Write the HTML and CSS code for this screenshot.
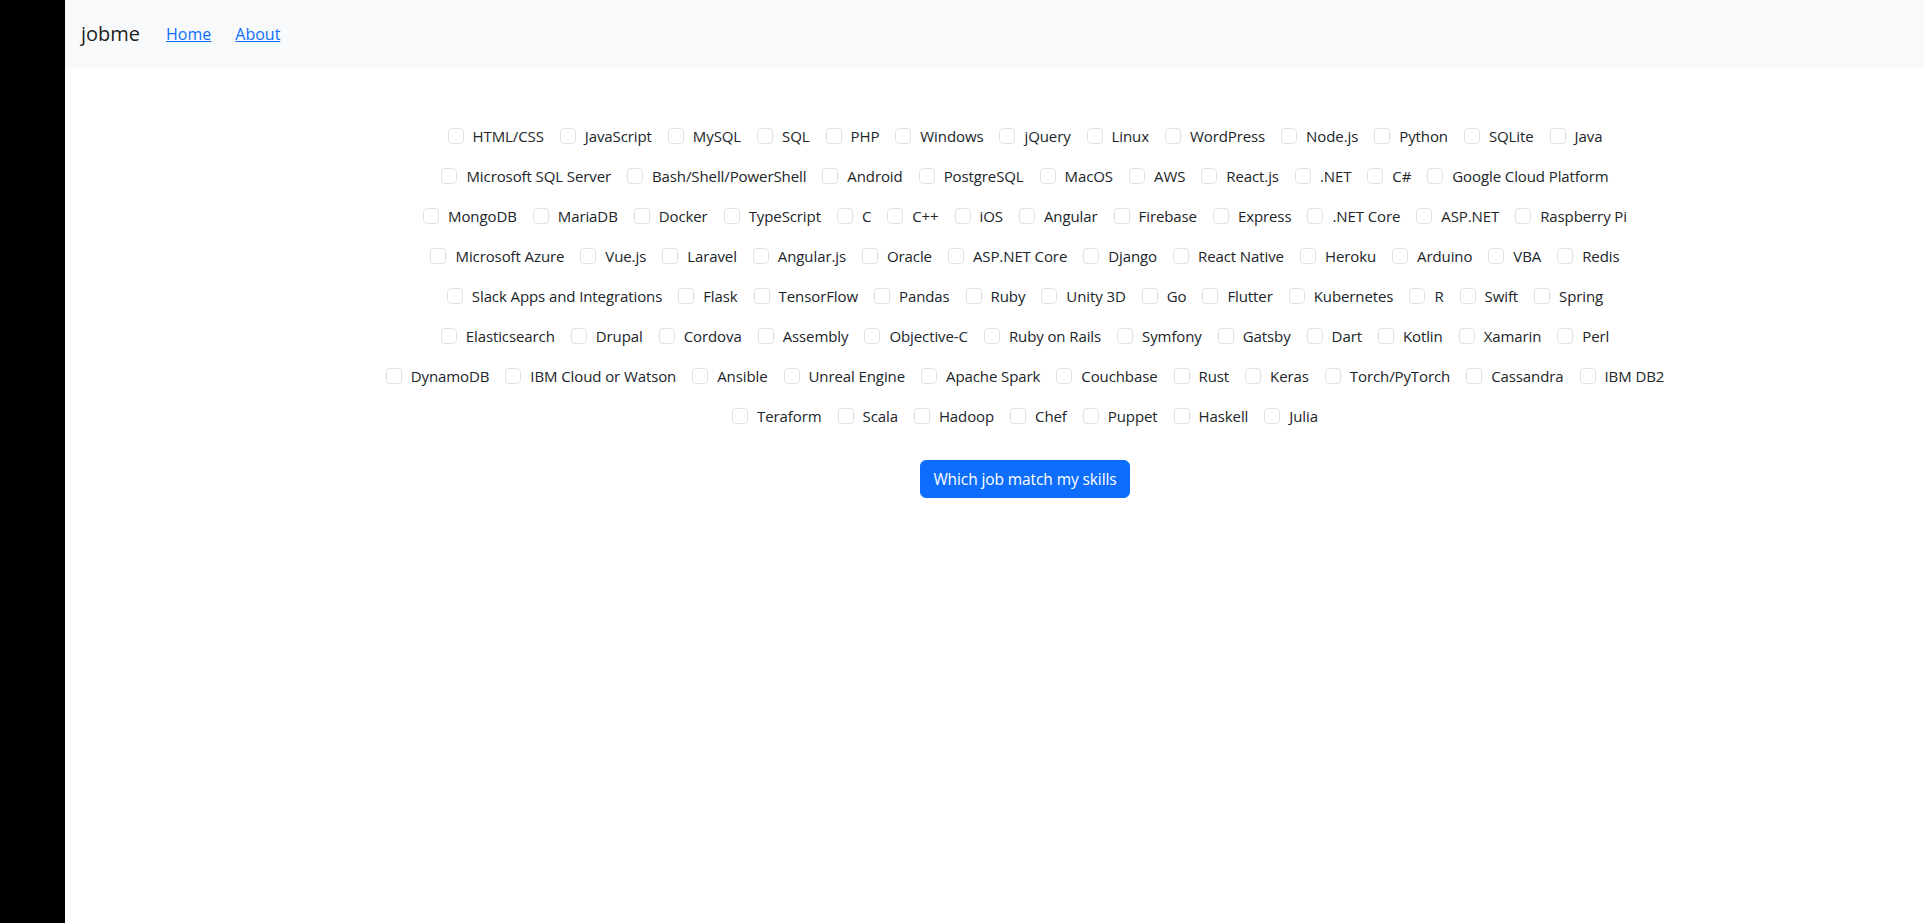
FILE: index.html
```html
<!DOCTYPE html>
<html lang="en">
<head>
<meta charset="utf-8">
<title>jobme</title>
<link rel="stylesheet" href="styles.css">
</head>
<body>
<div class="sidebar"></div>
<div class="main">
  <nav class="navbar">
    <span class="brand">jobme</span>
    <a class="navlink" href="#">Home</a>
    <a class="navlink" href="#">About</a>
  </nav>
  <form class="content">
    <div class="skills">
      <div class="row">
        <label class="check"><input type="checkbox"><span>HTML/CSS</span></label>
        <label class="check"><input type="checkbox"><span>JavaScript</span></label>
        <label class="check"><input type="checkbox"><span>MySQL</span></label>
        <label class="check"><input type="checkbox"><span>SQL</span></label>
        <label class="check"><input type="checkbox"><span>PHP</span></label>
        <label class="check"><input type="checkbox"><span>Windows</span></label>
        <label class="check"><input type="checkbox"><span>jQuery</span></label>
        <label class="check"><input type="checkbox"><span>Linux</span></label>
        <label class="check"><input type="checkbox"><span>WordPress</span></label>
        <label class="check"><input type="checkbox"><span>Node.js</span></label>
        <label class="check"><input type="checkbox"><span>Python</span></label>
        <label class="check"><input type="checkbox"><span>SQLite</span></label>
        <label class="check"><input type="checkbox"><span>Java</span></label>
      </div>
      <div class="row">
        <label class="check"><input type="checkbox"><span>Microsoft SQL Server</span></label>
        <label class="check"><input type="checkbox"><span>Bash/Shell/PowerShell</span></label>
        <label class="check"><input type="checkbox"><span>Android</span></label>
        <label class="check"><input type="checkbox"><span>PostgreSQL</span></label>
        <label class="check"><input type="checkbox"><span>MacOS</span></label>
        <label class="check"><input type="checkbox"><span>AWS</span></label>
        <label class="check"><input type="checkbox"><span>React.js</span></label>
        <label class="check"><input type="checkbox"><span>.NET</span></label>
        <label class="check"><input type="checkbox"><span>C#</span></label>
        <label class="check"><input type="checkbox"><span>Google Cloud Platform</span></label>
      </div>
      <div class="row">
        <label class="check"><input type="checkbox"><span>MongoDB</span></label>
        <label class="check"><input type="checkbox"><span>MariaDB</span></label>
        <label class="check"><input type="checkbox"><span>Docker</span></label>
        <label class="check"><input type="checkbox"><span>TypeScript</span></label>
        <label class="check"><input type="checkbox"><span>C</span></label>
        <label class="check"><input type="checkbox"><span>C++</span></label>
        <label class="check"><input type="checkbox"><span>iOS</span></label>
        <label class="check"><input type="checkbox"><span>Angular</span></label>
        <label class="check"><input type="checkbox"><span>Firebase</span></label>
        <label class="check"><input type="checkbox"><span>Express</span></label>
        <label class="check"><input type="checkbox"><span>.NET Core</span></label>
        <label class="check"><input type="checkbox"><span>ASP.NET</span></label>
        <label class="check"><input type="checkbox"><span>Raspberry Pi</span></label>
      </div>
      <div class="row">
        <label class="check"><input type="checkbox"><span>Microsoft Azure</span></label>
        <label class="check"><input type="checkbox"><span>Vue.js</span></label>
        <label class="check"><input type="checkbox"><span>Laravel</span></label>
        <label class="check"><input type="checkbox"><span>Angular.js</span></label>
        <label class="check"><input type="checkbox"><span>Oracle</span></label>
        <label class="check"><input type="checkbox"><span>ASP.NET Core</span></label>
        <label class="check"><input type="checkbox"><span>Django</span></label>
        <label class="check"><input type="checkbox"><span>React Native</span></label>
        <label class="check"><input type="checkbox"><span>Heroku</span></label>
        <label class="check"><input type="checkbox"><span>Arduino</span></label>
        <label class="check"><input type="checkbox"><span>VBA</span></label>
        <label class="check"><input type="checkbox"><span>Redis</span></label>
      </div>
      <div class="row">
        <label class="check"><input type="checkbox"><span>Slack Apps and Integrations</span></label>
        <label class="check"><input type="checkbox"><span>Flask</span></label>
        <label class="check"><input type="checkbox"><span>TensorFlow</span></label>
        <label class="check"><input type="checkbox"><span>Pandas</span></label>
        <label class="check"><input type="checkbox"><span>Ruby</span></label>
        <label class="check"><input type="checkbox"><span>Unity 3D</span></label>
        <label class="check"><input type="checkbox"><span>Go</span></label>
        <label class="check"><input type="checkbox"><span>Flutter</span></label>
        <label class="check"><input type="checkbox"><span>Kubernetes</span></label>
        <label class="check"><input type="checkbox"><span>R</span></label>
        <label class="check"><input type="checkbox"><span>Swift</span></label>
        <label class="check"><input type="checkbox"><span>Spring</span></label>
      </div>
      <div class="row">
        <label class="check"><input type="checkbox"><span>Elasticsearch</span></label>
        <label class="check"><input type="checkbox"><span>Drupal</span></label>
        <label class="check"><input type="checkbox"><span>Cordova</span></label>
        <label class="check"><input type="checkbox"><span>Assembly</span></label>
        <label class="check"><input type="checkbox"><span>Objective-C</span></label>
        <label class="check"><input type="checkbox"><span>Ruby on Rails</span></label>
        <label class="check"><input type="checkbox"><span>Symfony</span></label>
        <label class="check"><input type="checkbox"><span>Gatsby</span></label>
        <label class="check"><input type="checkbox"><span>Dart</span></label>
        <label class="check"><input type="checkbox"><span>Kotlin</span></label>
        <label class="check"><input type="checkbox"><span>Xamarin</span></label>
        <label class="check"><input type="checkbox"><span>Perl</span></label>
      </div>
      <div class="row">
        <label class="check"><input type="checkbox"><span>DynamoDB</span></label>
        <label class="check"><input type="checkbox"><span>IBM Cloud or Watson</span></label>
        <label class="check"><input type="checkbox"><span>Ansible</span></label>
        <label class="check"><input type="checkbox"><span>Unreal Engine</span></label>
        <label class="check"><input type="checkbox"><span>Apache Spark</span></label>
        <label class="check"><input type="checkbox"><span>Couchbase</span></label>
        <label class="check"><input type="checkbox"><span>Rust</span></label>
        <label class="check"><input type="checkbox"><span>Keras</span></label>
        <label class="check"><input type="checkbox"><span>Torch/PyTorch</span></label>
        <label class="check"><input type="checkbox"><span>Cassandra</span></label>
        <label class="check"><input type="checkbox"><span>IBM DB2</span></label>
      </div>
      <div class="row">
        <label class="check"><input type="checkbox"><span>Teraform</span></label>
        <label class="check"><input type="checkbox"><span>Scala</span></label>
        <label class="check"><input type="checkbox"><span>Hadoop</span></label>
        <label class="check"><input type="checkbox"><span>Chef</span></label>
        <label class="check"><input type="checkbox"><span>Puppet</span></label>
        <label class="check"><input type="checkbox"><span>Haskell</span></label>
        <label class="check"><input type="checkbox"><span>Julia</span></label>
      </div>
    </div>
    <div class="actions">
      <button type="button" class="btn">Which job match my skills</button>
    </div>
  </form>
</div>
</body>
</html>
```
FILE: styles.css
```css
html, body {
  margin: 0;
  padding: 0;
}
body {
  display: flex;
  min-height: 100vh;
  font-family: "Open Sans", "Noto Sans", sans-serif;
  font-size: 16px;
  line-height: 24px;
  color: #212529;
  background: #fff;
}
.sidebar {
  width: 65px;
  flex: 0 0 65px;
  background: #000;
}
.main {
  flex: 1;
  display: flex;
  flex-direction: column;
}
.navbar {
  height: 67px;
  background: #f8f9fa;
  display: flex;
  align-items: center;
  padding-left: 16px;
  padding-bottom: 1px;
}
.brand {
  font-size: 20px;
  line-height: 30px;
  color: rgba(0, 0, 0, 0.9);
  margin-right: 26px;
}
.navlink {
  color: #0d6efd;
  text-decoration: underline;
  margin-right: 24px;
}
.content {
  padding: 56px 0 0 61px;
  display: flex;
  flex-direction: column;
  align-items: center;
}
.skills {
  display: flex;
  flex-direction: column;
  align-items: center;
  gap: 16px;
}
.row {
  display: flex;
  justify-content: center;
  gap: 16px;
}
.check {
  display: flex;
  align-items: center;
  gap: 9px;
  height: 24px;
  white-space: nowrap;
  font-size: 15px;
  letter-spacing: -0.1px;
}
.check input {
  appearance: none;
  -webkit-appearance: none;
  margin: 0;
  width: 16px;
  height: 16px;
  border: 1px solid #dee2e6;
  border-radius: 4px;
  background: #fff;
  box-sizing: border-box;
}
.actions {
  margin-top: 32px;
}
.btn {
  font-family: inherit;
  font-size: 15.5px;
  letter-spacing: -0.1px;
  line-height: 24px;
  color: #fff;
  background: #0d6efd;
  border: 1px solid #0d6efd;
  border-radius: 6px;
  padding: 6px 12px;
}
```
